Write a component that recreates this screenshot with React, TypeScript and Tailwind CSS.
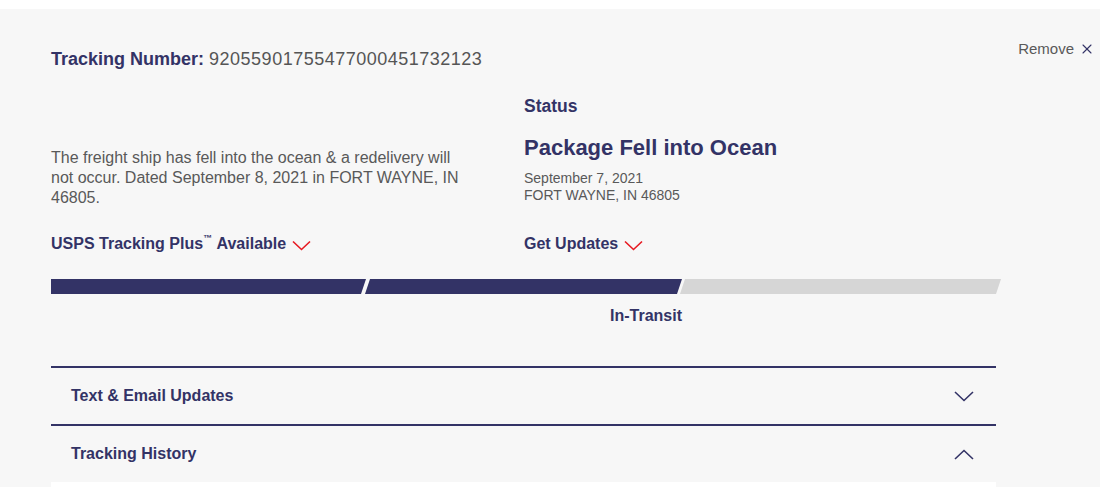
import { X } from 'lucide-react';

function RedChevron() {
  return (
    <svg width="19" height="11" viewBox="0 0 19 11" className="ml-[6px] mt-[2px]">
      <path d="M1 1.5 L9.5 9.5 L18 1.5" fill="none" stroke="#e71921" strokeWidth="1.6" />
    </svg>
  );
}

function AccChevron({ up }: { up?: boolean }) {
  return (
    <svg width="20" height="11" viewBox="0 0 20 11">
      <path
        d={up ? 'M1 10 L10 1.5 L19 10' : 'M1 1 L10 9.5 L19 1'}
        fill="none"
        stroke="#333366"
        strokeWidth="1.6"
      />
    </svg>
  );
}

export default function App() {
  return (
    <div className="w-[1100px] h-[487px] overflow-hidden bg-white pt-[9px] font-['Liberation_Sans',Arial,sans-serif]">
      <div className="bg-[#f7f7f7] h-full pl-[51px] pr-[5px]">
        {/* header row */}
        <div className="flex justify-between pt-[36px]">
          <div className="text-[18px] leading-[24px] mt-[2px]">
            <span className="font-bold text-[#333366]">Tracking Number:</span>{' '}
            <span className="text-[#555555] tracking-[0.5px]">92055901755477000451732123</span>
          </div>
          <div className="flex items-center self-start text-[15px] text-[#595959] -mt-[8px] h-[24px]">
            Remove
            <X size={16} strokeWidth={1.6} className="ml-[5px] text-[#333366]" />
          </div>
        </div>

        {/* status area */}
        <div className="flex mt-[24px]">
          <div className="w-[473px] flex flex-col">
            <p className="text-[16px] leading-[20px] text-[#595959] w-[415px] mt-[53px]">
              The freight ship has fell into the ocean &amp; a redelivery will not occur. Dated September 8, 2021 in FORT WAYNE, IN 46805.
            </p>
            <div className="flex items-center mt-[26px] text-[16px] font-bold text-[#333366] leading-[20px]">
              USPS Tracking Plus<sup className="text-[9px] -top-[6px] relative align-baseline">™</sup>&nbsp;Available
              <RedChevron />
            </div>
          </div>
          <div className="flex flex-col">
            <div className="text-[17.5px] font-bold text-[#333366] leading-[22px]">Status</div>
            <div className="text-[22px] font-bold text-[#333366] leading-[28px] mt-[17px]">Package Fell into Ocean</div>
            <div className="text-[14px] leading-[17px] text-[#595959] mt-[8px]">
              <div>September 7, 2021</div>
              <div>FORT WAYNE, IN 46805</div>
            </div>
            <div className="flex items-center mt-[30px] text-[16px] font-bold text-[#333366] leading-[20px]">
              Get Updates
              <RedChevron />
            </div>
          </div>
        </div>

        {/* progress bar */}
        <div className="flex mt-[25px] h-[15px] w-[950px]">
          <div className="w-[315px] h-full bg-[#333366] [clip-path:polygon(0_0,100%_0,calc(100%-5px)_100%,0_100%)]" />
          <div className="w-[321px] -ml-[5px] h-full bg-[#333366] [clip-path:polygon(9px_0,100%_0,calc(100%-5px)_100%,4px_100%)]" />
          <div className="w-[324px] -ml-[5px] h-full bg-[#d6d6d6] [clip-path:polygon(8px_0,100%_0,calc(100%-5px)_100%,3px_100%)]" />
        </div>
        <div className="w-[631px] text-right text-[16px] font-bold text-[#333366] leading-[20px] mt-[12px]">
          In-Transit
        </div>

        {/* accordions */}
        <div className="w-[945px] mt-[40px]">
          <div className="border-t-2 border-[#333366] h-[58px] flex items-center justify-between pl-[20px] pr-[22px]">
            <span className="text-[16px] font-bold text-[#333366]">Text &amp; Email Updates</span>
            <AccChevron />
          </div>
          <div className="border-t-2 border-[#333366] h-[58px] flex items-center justify-between pl-[20px] pr-[22px]">
            <span className="text-[16px] font-bold text-[#333366]">Tracking History</span>
            <AccChevron up />
          </div>
          <div className="bg-white h-[40px]" />
        </div>
      </div>
    </div>
  );
}
